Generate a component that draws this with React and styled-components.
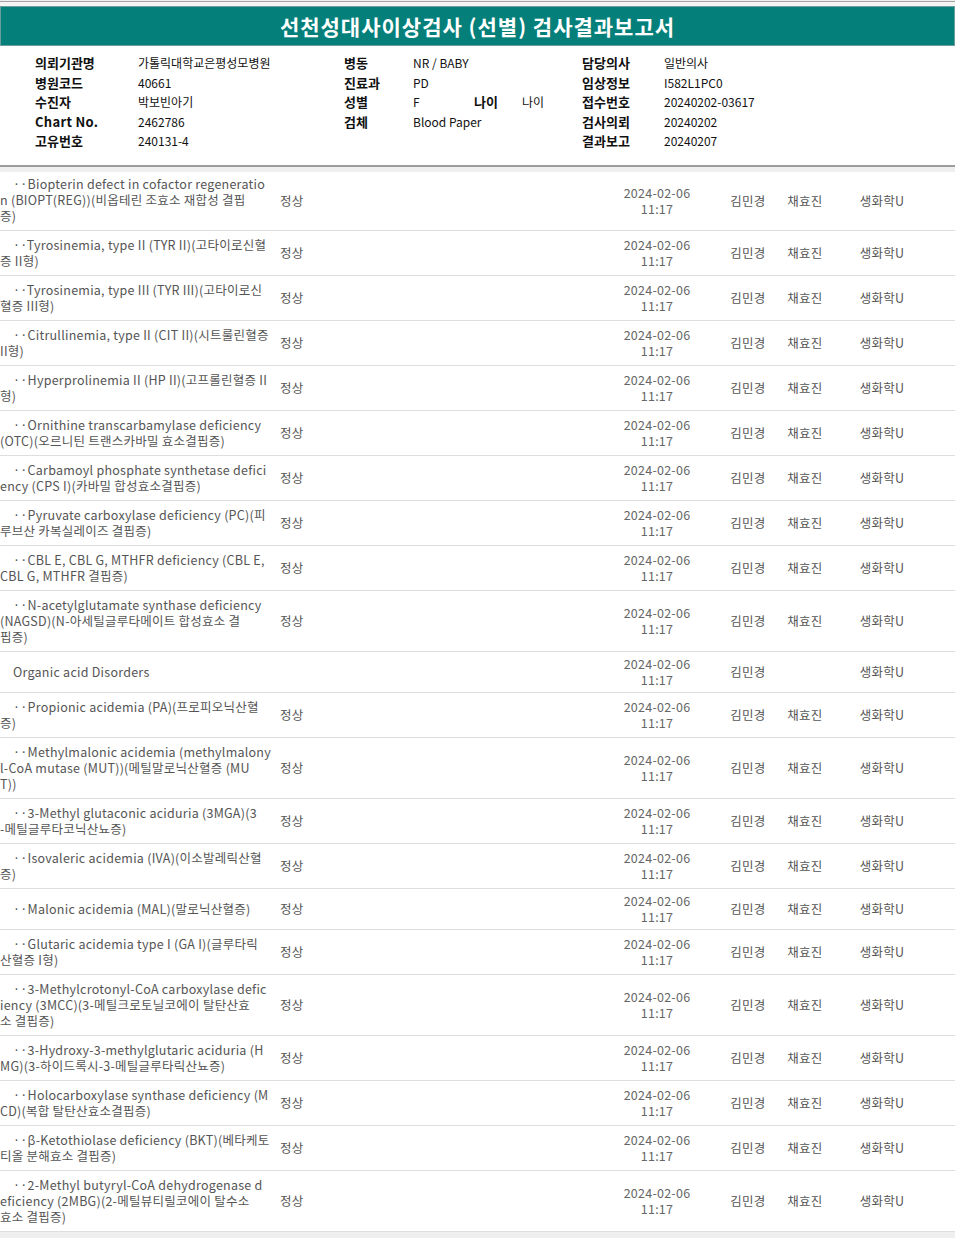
import React from "react";
import styled, { createGlobalStyle } from "styled-components";

const COLORS = {
  teal: "#047f7a",
  page: "#efefef",
  rule: "#a3a3a3",
  line: "#dedede",
  text: "#555555",
  date: "#666666",
  ink: "#111111",
};

const COLUMNS = "274px 326px 114px 68px 46px 108px 1fr";

const DOTS = "\u00B7\u00B7";

const INFO = [
  ["의뢰기관명", "가톨릭대학교은평성모병원", "병동", "NR / BABY", "담당의사", "일반의사"],
  ["병원코드", "40661", "진료과", "PD", "임상정보", "I582L1PC0"],
  ["수진자", "박보빈아기", "성별", null, "접수번호", "20240202-03617"],
  ["Chart No.", "2462786", "검체", "Blood Paper", "검사의뢰", "20240202"],
  ["고유번호", "240131-4", "", "", "결과보고", "20240207"],
];

const ROWS = [
  { lines: [DOTS + "Biopterin defect in cofactor regeneratio", "n (BIOPT(REG))(비옵테린 조효소 재합성 결핍", "증)"] },
  { lines: [DOTS + "Tyrosinemia, type II (TYR II)(고타이로신혈", "증 II형)"] },
  { lines: [DOTS + "Tyrosinemia, type III (TYR III)(고타이로신", "혈증 III형)"] },
  { lines: [DOTS + "Citrullinemia, type II (CIT II)(시트룰린혈증", "II형)"] },
  { lines: [DOTS + "Hyperprolinemia II (HP II)(고프롤린혈증 II", "형)"] },
  { lines: [DOTS + "Ornithine transcarbamylase deficiency", "(OTC)(오르니틴 트랜스카바밀 효소결핍증)"] },
  { lines: [DOTS + "Carbamoyl phosphate synthetase defici", "ency (CPS I)(카바밀 합성효소결핍증)"] },
  { lines: [DOTS + "Pyruvate carboxylase deficiency (PC)(피", "루브산 카복실레이즈 결핍증)"] },
  { lines: [DOTS + "CBL E, CBL G, MTHFR deficiency (CBL E,", "CBL G, MTHFR 결핍증)"] },
  { lines: [DOTS + "N-acetylglutamate synthase deficiency", "(NAGSD)(N-아세틸글루타메이트 합성효소 결", "핍증)"] },
  { lines: ["Organic acid Disorders"], group: true },
  { lines: [DOTS + "Propionic acidemia (PA)(프로피오닉산혈", "증)"] },
  { lines: [DOTS + "Methylmalonic acidemia (methylmalony", "l-CoA mutase (MUT))(메틸말로닉산혈증 (MU", "T))"] },
  { lines: [DOTS + "3-Methyl glutaconic aciduria (3MGA)(3", "-메틸글루타코닉산뇨증)"] },
  { lines: [DOTS + "Isovaleric acidemia (IVA)(이소발레릭산혈", "증)"] },
  { lines: [DOTS + "Malonic acidemia (MAL)(말로닉산혈증)"] },
  { lines: [DOTS + "Glutaric acidemia type I (GA I)(글루타릭", "산혈증 I형)"] },
  { lines: [DOTS + "3-Methylcrotonyl-CoA carboxylase defic", "iency (3MCC)(3-메틸크로토닐코에이 탈탄산효", "소 결핍증)"] },
  { lines: [DOTS + "3-Hydroxy-3-methylglutaric aciduria (H", "MG)(3-하이드록시-3-메틸글루타릭산뇨증)"] },
  { lines: [DOTS + "Holocarboxylase synthase deficiency (M", "CD)(복합 탈탄산효소결핍증)"] },
  { lines: [DOTS + "β-Ketothiolase deficiency (BKT)(베타케토", "티올 분해효소 결핍증)"] },
  { lines: [DOTS + "2-Methyl butyryl-CoA dehydrogenase d", "eficiency (2MBG)(2-메틸뷰티릴코에이 탈수소", "효소 결핍증)"] },
];

const GlobalStyle = createGlobalStyle`
  body {
    margin: 0;
    background: ${COLORS.page};
    font-family: "Noto Sans CJK KR", "Noto Sans", sans-serif;
  }
`;

const App = () => {
  return (
    <>
      <GlobalStyle />
      <TopBar>
        <Title>선천성대사이상검사 (선별) 검사결과보고서</Title>
      </TopBar>
      <Info>
        {INFO.map(([l1, v1, l2, v2, l3, v3]) => (
          <React.Fragment key={l1}>
            <Label $latin={l1 === "Chart No."}>{l1}</Label>
            <Value>{v1}</Value>
            <Label>{l2}</Label>
            {v2 === null ? (
              <>
                <Value>F</Value>
                <Label>나이</Label>
                <Value>나이</Value>
              </>
            ) : (
              <Value $span={3}>{v2}</Value>
            )}
            <Label>{l3}</Label>
            <Value>{v3}</Value>
          </React.Fragment>
        ))}
      </Info>
      <Table>
        {ROWS.map((row, i) => (
          <Row key={i}>
            <NameCell>
              {row.lines.map((line, j) => (
                <Line key={j}>{line}</Line>
              ))}
            </NameCell>
            <ResultCell>{row.group ? "" : "정상"}</ResultCell>
            <DateCell>
              <Line>2024-02-06</Line>
              <Line>11:17</Line>
            </DateCell>
            <Cell>김민경</Cell>
            <Cell>{row.group ? "" : "채효진"}</Cell>
            <Cell>생화학U</Cell>
          </Row>
        ))}
      </Table>
    </>
  );
};

const TopBar = styled.header`
  margin-top: 1px;
  border-top: 1px solid ${COLORS.rule};
  padding-top: 4px;
  background: #f4f4f4;
`;

const Title = styled.h1`
  margin: 0;
  height: 40px;
  box-sizing: border-box;
  border: 1px solid #6b9f9c;
  background: ${COLORS.teal};
  color: #ffffff;
  font-size: 21px;
  font-weight: 700;
  letter-spacing: 1px;
  display: flex;
  align-items: center;
  justify-content: center;
`;

const Info = styled.section`
  display: grid;
  grid-template-columns: 103px 206px 69px 61px 48px 60px 82px 1fr;
  grid-auto-rows: 19.5px;
  align-items: center;
  padding: 7px 0 14px 35px;
  background: #ffffff;
  border-bottom: 2px solid #9c9c9c;
  color: ${COLORS.ink};
`;

const Label = styled.span`
  font-size: 13px;
  font-weight: 700;
  letter-spacing: ${(p) => (p.$latin ? "0.3px" : "0")};
`;

const Value = styled.span`
  grid-column: span ${(p) => p.$span || 1};
  font-size: 12px;
  white-space: nowrap;
`;

const Table = styled.main`
  margin-top: 5px;
  background: #ffffff;
`;

const Row = styled.div`
  display: grid;
  grid-template-columns: ${COLUMNS};
  align-items: center;
  border-bottom: 1px solid ${COLORS.line};
  color: ${COLORS.text};
  font-size: 12.5px;
  letter-spacing: 0.25px;

  &:first-child > div:first-child {
    padding-top: 4px;
  }
`;

const NameCell = styled.div`
  padding: 6px 0;
  line-height: 16px;

  & > span:first-child {
    padding-left: 13px;
  }
`;

const Line = styled.span`
  display: block;
  white-space: nowrap;
`;

const ResultCell = styled.div`
  padding-left: 6px;
`;

const DateCell = styled.div`
  padding: 4px 0;
  line-height: 16px;
  text-align: center;
  color: ${COLORS.date};
`;

const Cell = styled.div`
  text-align: center;
`;

export default App;
